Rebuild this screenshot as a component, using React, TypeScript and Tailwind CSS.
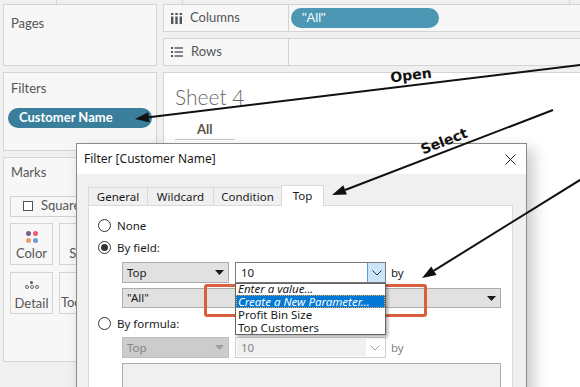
import React from "react";

function Radio({ checked = false, label }: { checked?: boolean; label: string }) {
  return (
    <div className="flex items-center h-[13px] gap-[6px]">
      <span className="w-[13px] h-[13px] rounded-full border border-[#333] bg-white flex items-center justify-center">
        {checked && <span className="w-[7px] h-[7px] rounded-full bg-[#333]" />}
      </span>
      <span className="text-[11.5px] text-[#1a1a1a] leading-none">{label}</span>
    </div>
  );
}

function Caret({ color = "#1a1a1a" }: { color?: string }) {
  return (
    <svg width="9" height="5" viewBox="0 0 9 5">
      <path d="M0 0h9L4.5 5z" fill={color} />
    </svg>
  );
}

function Chevron({ color = "#333" }: { color?: string }) {
  return (
    <svg width="10" height="6" viewBox="0 0 10 6">
      <path d="M0.5 0.5L5 5L9.5 0.5" fill="none" stroke={color} strokeWidth="1" />
    </svg>
  );
}

export default function App() {
  return (
    <div className="relative w-[580px] h-[387px] overflow-hidden bg-[#f0f0f0] font-['Lato',sans-serif] text-[#555]">
      {/* top strip */}
      <div className="h-[4px] flex">
        <div className="w-[57px] border-r border-[#d6d6d6]" />
        <div className="w-[126px] border-r border-[#d6d6d6]" />
        <div className="flex-1 border-r border-[#d6d6d6] mr-[10px]" />
      </div>

      <div className="flex">
        {/* left cards */}
        <div className="w-[163px] pl-[3px] pr-[6px] flex flex-col gap-[6px]">
          <div className="h-[62px] border border-[#d4d4d4] bg-[#f7f7f7] px-[7px] pt-[9px] text-[13px]">Pages</div>
          <div className="h-[79px] border border-[#d4d4d4] bg-[#f7f7f7] px-[4px] pt-[6px] text-[13px]">
            <div className="pl-[3px]">Filters</div>
            <div className="mt-[9px] h-[20px] rounded-full bg-[#3a7e9c] text-white font-bold text-[13px] flex items-center pl-[11px]">
              Customer Name
            </div>
          </div>
          <div className="h-[205px] border border-[#d4d4d4] bg-[#f7f7f7] px-[6px] pt-[5px] text-[13px]">
            <div className="pl-[1px]">Marks</div>
            <div className="mt-[13px] h-[21px] w-[160px] border border-[#d0d0d0] bg-[#f7f7f7] flex items-center pl-[12px] gap-[8px]">
              <span className="w-[10px] h-[10px] border border-[#555] bg-white" />
              <span>Square</span>
            </div>
            <div className="mt-[6px] grid grid-cols-[43px_43px] gap-x-[6px] gap-y-[7px]">
              <div className="h-[42px] border border-[#d4d4d4] flex flex-col items-center pt-[7px]">
                <div className="grid grid-cols-2 gap-[2px]">
                  <span className="w-[5px] h-[5px] rounded-full bg-[#7a5f93]" />
                  <span className="w-[5px] h-[5px] rounded-full bg-[#e8606b]" />
                  <span className="w-[5px] h-[5px] rounded-full bg-[#f09a6c]" />
                  <span className="w-[5px] h-[5px] rounded-full bg-[#6e9fd2]" />
                </div>
                <span className="mt-[4px] leading-none">Color</span>
              </div>
              <div className="h-[42px] border border-[#d4d4d4] flex flex-col items-center pt-[7px]">
                <span className="w-[8px] h-[8px] rounded-full border border-[#666]" />
                <span className="mt-[8px] leading-none">Size</span>
              </div>
              <div className="h-[42px] border border-[#d4d4d4] flex flex-col items-center pt-[8px]">
                <span className="w-[3px] h-[3px] rounded-full bg-[#555]" />
                <div className="flex gap-[1px] mt-[1px]">
                  <span className="w-[4px] h-[4px] rounded-full border border-[#666]" />
                  <span className="w-[4px] h-[4px] rounded-full border border-[#666]" />
                  <span className="w-[4px] h-[4px] rounded-full border border-[#666]" />
                </div>
                <span className="mt-[8px] leading-none">Detail</span>
              </div>
              <div className="h-[42px] border border-[#d4d4d4] flex flex-col items-center pt-[7px]">
                <span className="w-[8px] h-[9px] border border-[#666]" />
                <span className="mt-[7px] leading-none">Tooltip</span>
              </div>
            </div>
          </div>
        </div>

        {/* shelves + sheet */}
        <div className="flex-1 flex flex-col">
          <div className="h-[28px] border-y border-[#d4d4d4] bg-[#f7f7f7] flex">
            <div className="w-[126px] border-x border-[#d4d4d4] flex items-center pl-[7px] gap-[8px] text-[13px]">
              <svg width="11" height="11" viewBox="0 0 11 11">
                <rect x="0" y="0" width="2.4" height="2" fill="#555" />
                <rect x="4.3" y="0" width="2.4" height="2" fill="#555" />
                <rect x="8.6" y="0" width="2.4" height="2" fill="#555" />
                <rect x="0" y="3.5" width="2.4" height="7.5" fill="#555" />
                <rect x="4.3" y="3.5" width="2.4" height="7.5" fill="#555" />
                <rect x="8.6" y="3.5" width="2.4" height="7.5" fill="#555" />
              </svg>
              <span>Columns</span>
            </div>
            <div className="flex items-center pl-[2px]">
              <div className="w-[148px] h-[20px] rounded-full bg-[#4b97b4] text-white text-[13px] font-['Liberation_Sans',sans-serif] flex items-center pl-[11px]">
                "All"
              </div>
            </div>
          </div>
          <div className="mt-[6px] h-[28px] border-y border-[#d4d4d4] bg-[#f7f7f7] flex">
            <div className="w-[126px] border-x border-[#d4d4d4] flex items-center pl-[7px] gap-[8px] text-[13px]">
              <svg width="12" height="10" viewBox="0 0 12 10">
                <rect x="0" y="0" width="2" height="2" fill="#555" />
                <rect x="3.5" y="0.3" width="8.5" height="1.4" fill="#555" />
                <rect x="0" y="4" width="2" height="2" fill="#555" />
                <rect x="3.5" y="4.3" width="8.5" height="1.4" fill="#555" />
                <rect x="0" y="8" width="2" height="2" fill="#555" />
                <rect x="3.5" y="8.3" width="8.5" height="1.4" fill="#555" />
              </svg>
              <span>Rows</span>
            </div>
          </div>
          <div className="mt-[6px] h-[320px] bg-white border-t border-l border-[#d4d4d4] pl-[11px] pt-[13px]">
            <div className="text-[21px] font-light text-[#666] leading-none">Sheet 4</div>
            <div className="mt-[16px] w-[60px] border-b border-[#c8c8c8] pb-[3px] pl-[22px] text-[13px] font-bold text-[#5a5248] leading-none">
              All
            </div>
          </div>
        </div>
      </div>

      {/* Filter dialog */}
      <div className="absolute left-[76px] top-[143px] w-[451px] h-[270px] border border-[#8a8a8a] bg-[#f0f0f0] shadow-[6px_6px_14px_rgba(0,0,0,0.22)] font-['Noto_Sans',sans-serif] text-[#1a1a1a] text-[11.5px]">
        <div className="h-[30px] bg-white flex items-center justify-between pl-[7px] pr-[10px] text-[12px]">
          <span>Filter [Customer Name]</span>
          <svg width="11" height="11" viewBox="0 0 11 11">
            <path d="M0.5 0.5L10.5 10.5M10.5 0.5L0.5 10.5" stroke="#222" strokeWidth="1" />
          </svg>
        </div>
        <div className="pt-[11px] pl-[11px] pr-[13px]">
          <div className="flex items-end h-[20px] relative z-10">
            <div className="w-[60px] h-[18px] border border-b-0 border-[#d9d9d9] flex items-center justify-center">General</div>
            <div className="w-[67px] h-[18px] -ml-px border border-b-0 border-[#d9d9d9] flex items-center justify-center">Wildcard</div>
            <div className="w-[69px] h-[18px] -ml-px border border-b-0 border-[#d9d9d9] flex items-center justify-center">Condition</div>
            <div className="w-[43px] h-[21px] -ml-px -mb-px bg-white border border-b-0 border-[#d9d9d9] flex items-center justify-center">Top</div>
          </div>
          <div className="relative h-[230px] border border-[#d9d9d9] bg-white pl-[9px] pt-[13px]">
            <Radio label="None" />
            <div className="mt-[9px]">
              <Radio checked label="By field:" />
            </div>
            <div className="mt-[8px] ml-[24px] flex items-center">
              <div className="w-[107px] h-[21px] bg-[#e1e1e1] border border-[#adadad] flex items-center justify-between pl-[4px] pr-[4px]">
                <span>Top</span>
                <Caret />
              </div>
              <div className="relative ml-[6px] w-[151px] h-[21px] border border-[#7a7a7a] bg-white flex items-center">
                <span className="pl-[5px] flex-1">10</span>
                <div className="w-[18px] h-[19px] bg-[#cce4f7] border-l border-[#569de5] flex items-center justify-center">
                  <Chevron />
                </div>
                {/* opened list */}
                <div className="absolute left-[-1px] top-[20px] w-[151px] h-[52px] border border-[#646464] bg-white shadow-[2px_2px_3px_rgba(0,0,0,0.3)] overflow-hidden z-20 leading-[13px]">
                  <div className="-mt-[2px]">
                    <div className="h-[13px] pl-[2px] italic">Enter a value...</div>
                    <div className="h-[13px] pl-[2px] italic bg-[#0078d7] text-white outline outline-1 outline-dotted outline-[#e9a24a] -outline-offset-1">
                      Create a New Parameter...
                    </div>
                    <div className="h-[13px] pl-[2px]">Profit Bin Size</div>
                    <div className="h-[13px] pl-[2px]">Top Customers</div>
                  </div>
                </div>
              </div>
              <span className="ml-[5px]">by</span>
            </div>
            <div className="mt-[5px] ml-[24px] w-[379px] h-[20px] bg-[#e1e1e1] border border-[#adadad] flex items-center justify-between pl-[4px] pr-[4px]">
              <span>"All"</span>
              <Caret />
            </div>
            <div className="mt-[9px]">
              <Radio label="By formula:" />
            </div>
            <div className="mt-[7px] ml-[24px] flex items-center">
              <div className="w-[107px] h-[21px] bg-[#cccccc] border border-[#bfbfbf] text-[#838383] flex items-center justify-between pl-[4px] pr-[4px]">
                <span>Top</span>
                <Caret color="#a0a0a0" />
              </div>
              <div className="ml-[6px] w-[151px] h-[21px] border border-[#cccccc] bg-white flex items-center p-[1px]">
                <span className="pl-[4px] flex-1 h-full bg-[#f0f0f0] text-[#838383] flex items-center">10</span>
                <div className="w-[18px] h-full flex items-center justify-center">
                  <Chevron color="#a0a0a0" />
                </div>
              </div>
              <span className="ml-[5px] text-[#838383]">by</span>
            </div>
            <div className="mt-[5px] ml-[24px] w-[379px] h-[60px] bg-[#f0f0f0] border border-[#adadad]" />
          </div>
        </div>
      </div>

      {/* annotation box */}
      <div className="absolute left-[204px] top-[284px] w-[223px] h-[33px] border-[3px] border-[#d9603b] rounded-[3px]" />

      {/* arrows */}
      <svg className="absolute inset-0 pointer-events-none" width="580" height="387" viewBox="0 0 580 387">
        <g stroke="#111" strokeWidth="2" fill="#111">
          <line x1="600" y1="62.5" x2="148.9" y2="117.3" />
          <polygon points="135,119 149.5,122.3 148.3,112.3" stroke="none" />
          <line x1="553" y1="110" x2="345.1" y2="190" />
          <polygon points="332,195 346.9,194.6 343.3,185.3" stroke="none" />
          <line x1="590" y1="173.8" x2="433.9" y2="270.6" />
          <polygon points="422,278 436.5,274.9 431.3,266.4" stroke="none" />
        </g>
        <text x="411" y="80" textAnchor="middle" transform="rotate(-7 411 75)" fontFamily="DejaVu Sans, sans-serif" fontWeight="bold" fontSize="14" fill="#111">
          Open
        </text>
        <text x="444" y="146" textAnchor="middle" transform="rotate(-21 444 141)" fontFamily="DejaVu Sans, sans-serif" fontWeight="bold" fontSize="14" fill="#111">
          Select
        </text>
      </svg>
    </div>
  );
}
